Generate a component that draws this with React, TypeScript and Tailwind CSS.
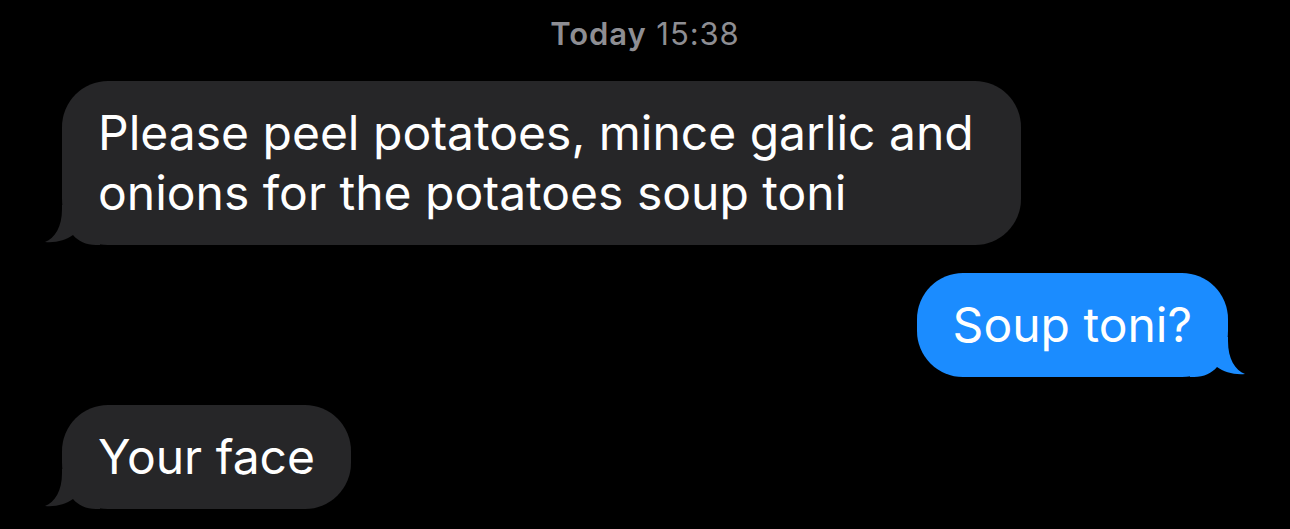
import React from 'react';

type Msg = { text: string; from: 'them' | 'me' };

const messages: Msg[] = [
  { text: 'Please peel potatoes, mince garlic and onions for the potatoes soup toni', from: 'them' },
  { text: 'Soup toni?', from: 'me' },
  { text: 'Your face', from: 'them' },
];

function Tail({ color, side }: { color: string; side: 'left' | 'right' }) {
  return (
    <svg
      width="60"
      height="40"
      viewBox="0 0 60 40"
      className={
        side === 'left'
          ? 'absolute bottom-0 -left-[22px]'
          : 'absolute bottom-0 -right-[22px] -scale-x-100'
      }
    >
      <path
        d="M22 0 L22 4 C22 22 15 33 5 37 C16 38 26 35 33 30 C38 36 46 40 56 40 L60 40 L60 0 Z"
        fill={color}
      />
    </svg>
  );
}

function Bubble({ msg }: { msg: Msg }) {
  const mine = msg.from === 'me';
  const color = mine ? '#1b8cff' : '#262628';
  return (
    <div className={`flex ${mine ? 'justify-end' : 'justify-start'}`}>
      <div
        className={`relative max-w-[959px] rounded-[46px] px-[36px] py-[22px] text-[48px] leading-[60px] text-white ${
          mine ? 'bg-[#1b8cff]' : 'bg-[#262628]'
        }`}
      >
        <Tail color={color} side={mine ? 'right' : 'left'} />
        <span className="relative">{msg.text}</span>
      </div>
    </div>
  );
}

export default function App() {
  return (
    <div
      className="w-[1290px] h-[529px] bg-black overflow-hidden px-[62px] pt-[16px]"
      style={{ fontFamily: 'Inter, "Noto Sans", sans-serif' }}
    >
      <div className="h-[36px] text-center text-[31px] leading-[36px] tracking-[0.03em] text-[#8e8e93]">
        <span className="font-semibold">Today</span> 15:38
      </div>
      <div className="mt-[29px] flex flex-col gap-[28px]">
        {messages.map((m, i) => (
          <Bubble key={i} msg={m} />
        ))}
      </div>
    </div>
  );
}
